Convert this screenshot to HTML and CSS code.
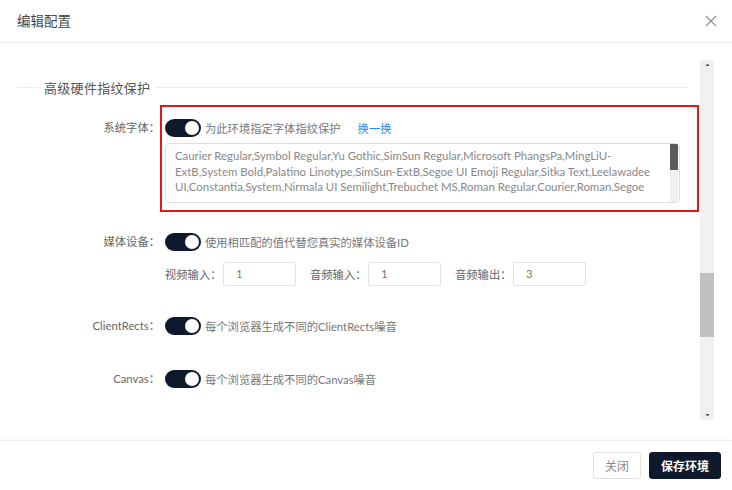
FILE: index.html
```html
<!DOCTYPE html>
<html lang="zh-CN">
<head>
<meta charset="utf-8">
<title>编辑配置</title>
<link rel="stylesheet" href="styles.css">
</head>
<body>
<div class="dialog">
  <header class="dlg-head">
    <span class="dlg-title">编辑配置</span>
    <svg class="dlg-close" width="12" height="12" viewBox="0 0 12 12"><path d="M1 1 L11 11 M11 1 L1 11" stroke="#8a8a8a" stroke-width="1.1" fill="none"/></svg>
  </header>
  <main class="dlg-body">
    <div class="content">
      <div class="section-head">
        <span class="line-left"></span>
        <span class="section-title">高级硬件指纹保护</span>
        <span class="line-right"></span>
      </div>

      <div class="row row-fonts">
        <div class="label">系统字体：</div>
        <div class="control highlight">
          <div class="switch-line">
            <span class="switch"><span class="knob"></span></span>
            <span class="desc">为此环境指定字体指纹保护</span>
            <a class="link">换一换</a>
          </div>
          <div class="textarea">
            <div class="ta-text">
              <span class="ta-line">Caurier Regular,Symbol Regular,Yu Gothic,SimSun Regular,Microsoft PhangsPa,MingLiU-</span>
              <span class="ta-line">ExtB,System Bold,Palatino Linotype,SimSun-ExtB,Segoe UI Emoji Regular,Sitka Text,Leelawadee</span>
              <span class="ta-line">UI,Constantia,System,Nirmala UI Semilight,Trebuchet MS,Roman Regular,Courier,Roman,Segoe</span>
            </div>
            <div class="ta-scroll"><span class="ta-thumb"></span></div>
          </div>
        </div>
      </div>

      <div class="row row-media">
        <div class="label">媒体设备：</div>
        <div class="control">
          <div class="switch-line">
            <span class="switch"><span class="knob"></span></span>
            <span class="desc">使用相匹配的值代替您真实的媒体设备ID</span>
          </div>
          <div class="inputs">
            <div class="field"><span class="f-label">视频输入：</span><span class="input">1</span></div>
            <div class="field"><span class="f-label">音频输入：</span><span class="input">1</span></div>
            <div class="field"><span class="f-label">音频输出：</span><span class="input">3</span></div>
          </div>
        </div>
      </div>

      <div class="row row-rects">
        <div class="label">ClientRects：</div>
        <div class="control">
          <div class="switch-line">
            <span class="switch"><span class="knob"></span></span>
            <span class="desc">每个浏览器生成不同的ClientRects噪音</span>
          </div>
        </div>
      </div>

      <div class="row row-canvas">
        <div class="label">Canvas：</div>
        <div class="control">
          <div class="switch-line">
            <span class="switch"><span class="knob"></span></span>
            <span class="desc">每个浏览器生成不同的Canvas噪音</span>
          </div>
        </div>
      </div>
    </div>
    <div class="scrollbar">
      <svg class="arrow" width="13" height="10" viewBox="0 0 13 10"><path d="M4.5 6 L6.5 3.5 L8.5 6 Z" fill="#505050"/></svg>
      <div class="track"><span class="thumb"></span></div>
      <svg class="arrow" width="13" height="10" viewBox="0 0 13 10"><path d="M4.5 4 L6.5 6.5 L8.5 4 Z" fill="#505050"/></svg>
    </div>
  </main>
  <footer class="dlg-foot">
    <button class="btn btn-default">关闭</button>
    <button class="btn btn-primary">保存环境</button>
  </footer>
</div>
</body>
</html>
```

FILE: styles.css
```css
* { box-sizing: border-box; }
html, body { margin: 0; padding: 0; }
body {
  width: 732px;
  height: 490px;
  background: #fff;
  font-family: "Lato", "Noto Sans CJK SC", sans-serif;
  font-size: 11.3px;
  color: #666;
  overflow: hidden;
}
.dialog {
  display: flex;
  flex-direction: column;
  height: 490px;
}
.dlg-head {
  height: 43px;
  flex: none;
  display: flex;
  align-items: center;
  justify-content: space-between;
  padding: 0 15px 2px 17px;
  border-bottom: 1px solid #ececec;
}
.dlg-title {
  font-size: 13.5px;
  color: #444;
}
.dlg-close { display: block; margin-top: 1px; }

.dlg-body {
  flex: none;
  height: 397px;
  display: flex;
}
.content {
  flex: 1;
  padding-top: 34px;
}
.section-head {
  display: flex;
  align-items: center;
  height: 20px;
  padding-left: 17px;
  padding-right: 12px;
}
.line-left, .line-right {
  height: 1px;
  background: #ececec;
}
.line-left { width: 21px; }
.line-right { flex: 1; }
.section-title {
  font-size: 13px;
  color: #555;
  padding: 0 6px;
  letter-spacing: 0.3px;
}

.row {
  display: flex;
  align-items: flex-start;
}
.label {
  width: 160px;
  flex: none;
  text-align: right;
  color: #666;
  line-height: 18px;
  white-space: nowrap;
}
.control {
  flex: 1;
  padding-left: 5px;
}
.row-fonts { margin-top: 8px; }
.row-fonts .label { padding-top: 14px; }
.highlight {
  border: 2px solid #e5141d;
  padding: 12px 17px 7px 3px;
  margin-right: 1px;
}
.switch-line {
  display: flex;
  align-items: center;
  height: 18px;
}
.switch {
  width: 36px;
  height: 18px;
  border-radius: 9px;
  background: #0e1a2b;
  position: relative;
  flex: none;
}
.knob {
  position: absolute;
  right: 2px;
  top: 2px;
  width: 14px;
  height: 14px;
  border-radius: 50%;
  background: #fff;
}
.desc {
  margin-left: 4px;
  color: #777;
  white-space: nowrap;
}
.link {
  margin-left: 17px;
  color: #2a8cf0;
  cursor: pointer;
}
.textarea {
  margin-top: 6px;
  height: 60px;
  border: 1px solid #dedede;
  border-radius: 4px;
  display: flex;
  overflow: hidden;
}
.ta-text {
  flex: 1;
  padding: 4px 0 0 9px;
  overflow: hidden;
}
.ta-line {
  display: block;
  white-space: nowrap;
  font-size: 11.4px;
  line-height: 15.5px;
  color: #888;
}
.ta-scroll {
  width: 8px;
  flex: none;
  margin-right: 1px;
  background: #f1f1f1;
  display: flex;
  flex-direction: column;
}
.ta-thumb {
  height: 26px;
  background: #5a5a5a;
}

.row-media { margin-top: 21px; }
.inputs {
  display: flex;
  gap: 14px;
  margin-top: 11px;
}
.field {
  display: flex;
  align-items: center;
}
.f-label {
  width: 58px;
  color: #666;
  white-space: nowrap;
}
.input {
  width: 73px;
  height: 24px;
  border: 1px solid #e4e4e4;
  border-radius: 2px;
  line-height: 22px;
  padding-left: 12px;
  color: #777;
}
.row-rects { margin-top: 31px; }
.row-canvas { margin-top: 35px; }

.scrollbar {
  width: 14px;
  flex: none;
  margin: 17px 18px 20px 0;
  background: #f1f1f1;
  display: flex;
  flex-direction: column;
  align-items: center;
}
.arrow { display: block; flex: none; }
.track {
  flex: 1;
  width: 100%;
  padding-top: 203px;
}
.thumb {
  display: block;
  width: 100%;
  height: 64px;
  background: #c1c1c1;
}

.dlg-foot {
  flex: 1;
  border-top: 1px solid #efefef;
  box-shadow: 0 -1px 3px rgba(0,0,0,0.03);
  display: flex;
  justify-content: flex-end;
  align-items: flex-start;
  padding: 11px 11px 0 0;
  gap: 8px;
}
.btn {
  height: 27px;
  border-radius: 3px;
  font-family: "Noto Sans CJK SC", sans-serif;
  font-size: 12px;
  padding: 0;
  cursor: pointer;
}
.btn-default {
  width: 48px;
  background: #fff;
  border: 1px solid #e2e2e2;
  color: #888;
}
.btn-primary {
  width: 72px;
  background: #0e1a2b;
  border: 1px solid #0e1a2b;
  color: #fff;
  font-weight: bold;
}
```
